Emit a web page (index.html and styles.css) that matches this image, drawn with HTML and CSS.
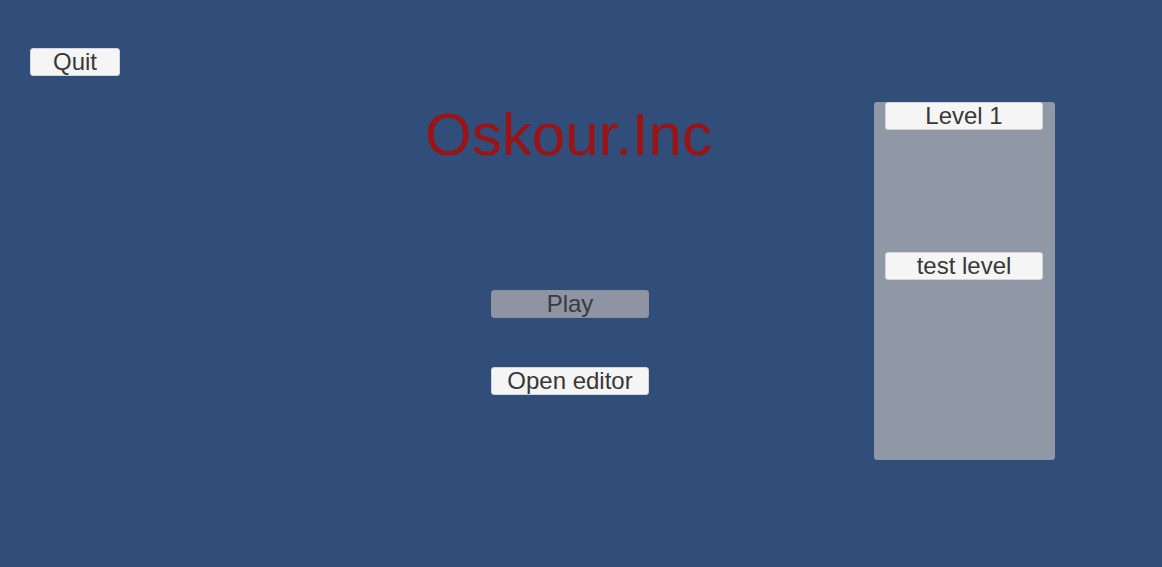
FILE: index.html
```html
<!DOCTYPE html>
<html>
<head>
<meta charset="utf-8">
<link rel="stylesheet" href="styles.css">
</head>
<body>
<div class="screen">
  <div class="left">
    <div class="btn btn-quit">Quit</div>
  </div>
  <div class="center">
    <div class="title">Oskour.Inc</div>
    <div class="btn btn-main btn-disabled">Play</div>
    <div class="btn btn-main btn-editor">Open editor</div>
  </div>
  <div class="panel">
    <div class="btn btn-main">Level 1</div>
    <div class="btn btn-main btn-test">test level</div>
  </div>
</div>
</body>
</html>
```
FILE: styles.css
```css
html, body {
  margin: 0;
  padding: 0;
  background: #314d79;
}
.screen {
  width: 1162px;
  height: 567px;
  overflow: hidden;
  display: flex;
  align-items: flex-start;
  font-family: "Liberation Sans", Arial, sans-serif;
}
.left {
  width: 491px;
  box-sizing: border-box;
  padding: 48px 0 0 30px;
}
.btn {
  box-sizing: border-box;
  height: 28px;
  background: #f5f5f5;
  border: 1px solid #d3d5d9;
  border-radius: 3px;
  color: #383838;
  font-size: 24px;
  line-height: 26px;
  text-align: center;
  white-space: nowrap;
}
.btn-quit {
  width: 90px;
}
.center {
  width: 158px;
  display: flex;
  flex-direction: column;
  align-items: center;
  padding-top: 100px;
}
.title {
  font-size: 60px;
  line-height: 70px;
  color: #9b1414;
  white-space: nowrap;
  margin-left: -3px;
}
.btn-main {
  width: 158px;
}
.btn-disabled {
  margin-top: 120px;
  background: #8e94a2;
  border-color: #8a909e;
  color: #383b42;
}
.btn-editor {
  margin-top: 49px;
}
.panel {
  margin-left: 225px;
  margin-top: 102px;
  width: 181px;
  height: 358px;
  box-sizing: border-box;
  padding: 0 11px;
  background: #9097a5;
  border-radius: 3px;
  display: flex;
  flex-direction: column;
  gap: 122px;
}
```
